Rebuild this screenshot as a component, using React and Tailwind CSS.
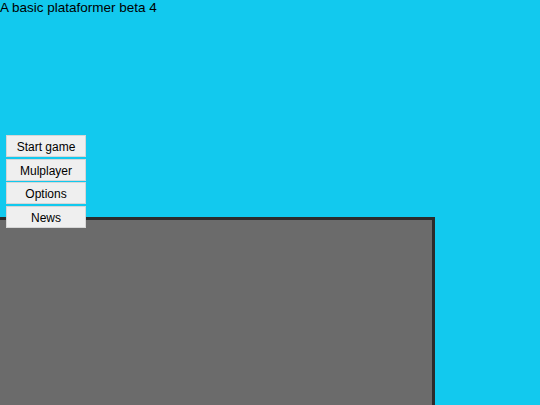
export default function App() {
  const buttons = ['Start game', 'Mulplayer', 'Options', 'News']

  return (
    <div
      className="relative h-[405px] w-full overflow-hidden bg-[#12c9ee] text-black"
      style={{ fontFamily: '"Liberation Sans", Arial, sans-serif' }}
    >
      <p className="text-[13.5px] leading-[15px]">A basic plataformer beta 4</p>

      {/* ground */}
      <div className="mt-[202px] h-[200px] w-[435px] border-t-[3px] border-r-[3px] border-[#2b2b2b] bg-[#6b6b6b]" />

      {/* menu */}
      <div className="absolute left-[6px] top-[135px] z-10 flex w-[80px] flex-col gap-[1.5px]">
        {buttons.map((label) => (
          <button
            key={label}
            type="button"
            className="h-[22px] w-full border border-[#d6d6d6] bg-[#efefef] pt-[2px] text-center text-[12px] leading-none text-black"
          >
            {label}
          </button>
        ))}
      </div>
    </div>
  )
}
